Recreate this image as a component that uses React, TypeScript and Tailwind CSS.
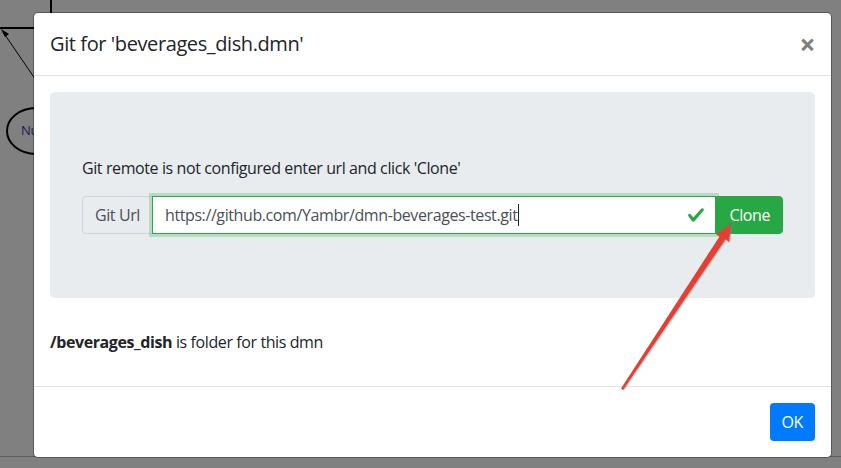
export default function App() {
  return (
    <div className="relative h-[468px] w-[841px] overflow-hidden bg-[#808080] font-['Open_Sans',sans-serif] text-[16px] tracking-[-0.4px] text-[#212529]">
      {/* diagram behind the backdrop */}
      <svg className="absolute inset-0" width="841" height="468" viewBox="0 0 841 468">
        <line x1="51" y1="0" x2="51" y2="28" stroke="#000" strokeWidth="2" />
        <line x1="0" y1="28" x2="60" y2="28" stroke="#000" strokeWidth="2" />
        <line x1="3" y1="32" x2="40" y2="86" stroke="#000" strokeWidth="1" />
        <polygon points="1,29 9,34 5,37" fill="#000" />
        <ellipse cx="36" cy="131" rx="29" ry="23" fill="none" stroke="#000" strokeWidth="2" />
        <text x="21" y="135" fontSize="13" fill="#1b1858" fontFamily="Open Sans, sans-serif">
          Nu
        </text>
        <line x1="0" y1="456.5" x2="841" y2="456.5" stroke="#5e5e5e" strokeWidth="1" />
      </svg>

      <div className="absolute left-[33px] top-[12px] w-[799px] rounded-[5px] border border-black/30 bg-white bg-clip-padding">
        <div className="flex items-start justify-between border-b border-[#dee2e6] p-4">
          <h5 className="text-[20px] font-medium leading-[30px]">Git for 'beverages_dish.dmn'</h5>
          <button className="-my-4 -mr-4 p-4 text-[28px] font-bold leading-[30px] text-black opacity-50">×</button>
        </div>

        <div className="p-4">
          <div className="mb-8 rounded-[5px] bg-[#e9ecef] px-8 py-16">
            <p className="mb-4 leading-6">Git remote is not configured enter url and click 'Clone'</p>
            <div className="flex h-[38px]">
              <span className="flex items-center rounded-l-[4px] border border-[#ced4da] bg-[#e9ecef] px-3 text-[#495057]">
                Git Url
              </span>
              <div className="relative z-10 -ml-px flex flex-1 items-center border border-[#28a745] bg-white pl-3 pr-[10px] text-[#495057] shadow-[0_0_0_3px_rgba(40,167,69,0.25)]">
                <span>https://github.com/Yambr/dmn-beverages-test.git</span>
                <span className="ml-px h-[22px] w-px bg-[#212529]" />
                <svg className="ml-auto" width="18" height="18" viewBox="0 0 8 8">
                  <path
                    fill="#28a745"
                    d="M2.3 6.73L.6 4.53c-.4-1.04.46-1.4 1.1-.8l1.1 1.4 3.4-3.8c.6-.63 1.6-.27 1.2.7l-4 4.6c-.43.5-.8.4-1.1.1z"
                  />
                </svg>
              </div>
              <button className="rounded-r-[4px] border border-[#28a745] bg-[#28a745] px-3 text-white">Clone</button>
            </div>
          </div>
          <p className="mb-4 leading-6">
            <b className="font-bold">/beverages_dish</b> is folder for this dmn
          </p>
        </div>

        <div className="flex justify-end border-t border-[#dee2e6] p-3">
          <button className="m-1 h-[38px] rounded-[4px] bg-[#007bff] px-3 text-white">OK</button>
        </div>
      </div>

      {/* annotation arrow */}
      <svg className="pointer-events-none absolute inset-0" width="841" height="468" viewBox="0 0 841 468">
        <polygon
          points="624,390.7 726.5,240.3 730,243 732.5,225.5 716.8,235 720.5,237.5 622,389.3"
          fill="#8a8a8a"
          opacity="0.45"
        />
        <polygon
          points="623,390 725.5,239.3 729,242 731,224 715.8,234 719.5,236.5 621,388.6"
          fill="#e53f35"
        />
      </svg>
    </div>
  );
}
